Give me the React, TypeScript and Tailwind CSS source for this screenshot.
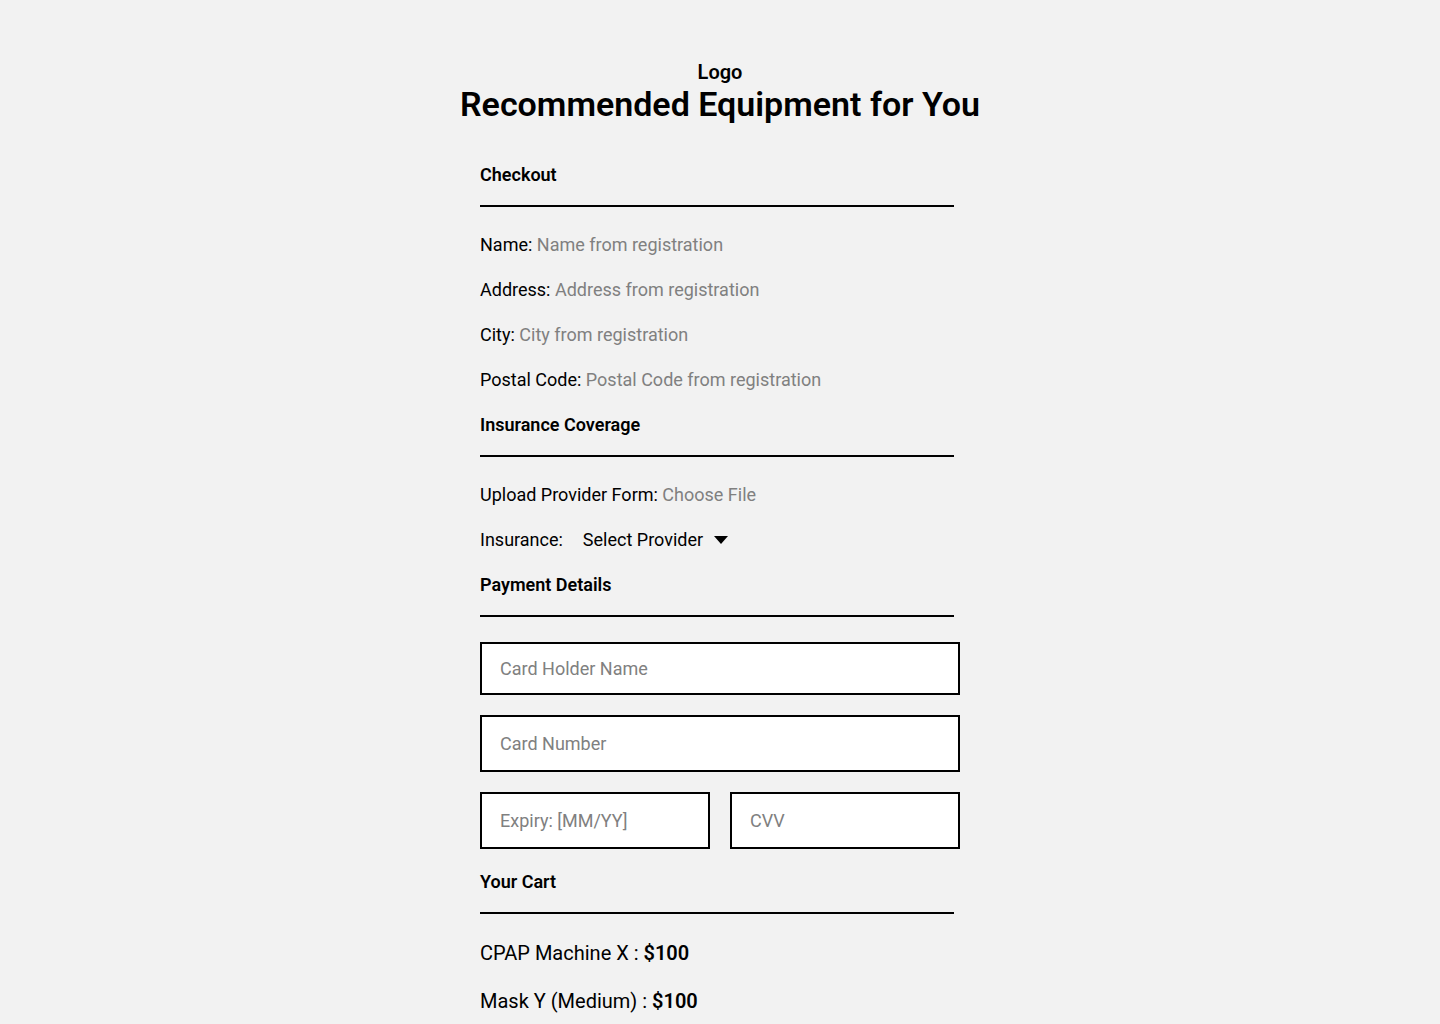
import React from "react";

const Divider = () => <div className="mt-[18px] h-[2px] w-[474px] bg-black" />;

const SectionTitle = ({ children, mt }: { children: React.ReactNode; mt: string }) => (
  <div className={mt}>
    <div className="text-[18px] leading-[24px] font-semibold text-black">{children}</div>
    <Divider />
  </div>
);

const Field = ({ label, value }: { label: string; value: string }) => (
  <div className="text-[18px] leading-[24px] text-black">
    {label} <span className="text-[#808080]">{value}</span>
  </div>
);

const Input = ({ placeholder, h, className = "" }: { placeholder: string; h: string; className?: string }) => (
  <div className={`${h} ${className} flex items-center border-2 border-black bg-white pl-[18px] text-[18px] text-[#808080]`}>
    {placeholder}
  </div>
);

export default function App() {
  return (
    <div className="min-h-[1024px] w-full bg-[#f2f2f2] font-['Roboto',sans-serif] text-black">
      <div className="flex flex-col items-center pt-[60px]">
        <div className="text-[20px] leading-[24px] font-semibold">Logo</div>
        <h1 className="mt-[1px] text-[34px] leading-[38px] font-semibold">Recommended Equipment for You</h1>
      </div>
      <div className="mx-auto flex w-[480px] flex-col">
        <SectionTitle mt="mt-[40px]">Checkout</SectionTitle>
        <div className="mt-[26px] flex flex-col gap-[21px]">
          <Field label="Name:" value="Name from registration" />
          <Field label="Address:" value="Address from registration" />
          <Field label="City:" value="City from registration" />
          <Field label="Postal Code:" value="Postal Code from registration" />
        </div>
        <SectionTitle mt="mt-[21px]">Insurance Coverage</SectionTitle>
        <div className="mt-[26px] flex flex-col gap-[21px]">
          <Field label="Upload Provider Form:" value="Choose File" />
          <div className="flex items-center text-[18px] leading-[24px]">
            <span>Insurance:</span>
            <span className="ml-[20px]">Select Provider</span>
            <svg className="ml-[11px]" width="14" height="8" viewBox="0 0 14 8">
              <path d="M0 0 L14 0 L7 8 Z" fill="black" />
            </svg>
          </div>
        </div>
        <SectionTitle mt="mt-[21px]">Payment Details</SectionTitle>
        <div className="mt-[25px] flex flex-col gap-[20px]">
          <Input placeholder="Card Holder Name" h="h-[53px]" />
          <Input placeholder="Card Number" h="h-[57px]" />
          <div className="flex gap-[20px]">
            <Input placeholder="Expiry: [MM/YY]" h="h-[57px]" className="flex-1" />
            <Input placeholder="CVV" h="h-[57px]" className="flex-1" />
          </div>
        </div>
        <SectionTitle mt="mt-[21px]">Your Cart</SectionTitle>
        <div className="mt-[25px] flex flex-col gap-[20px] text-[20px] leading-[28px]">
          <div>
            CPAP Machine X : <span className="font-semibold">$100</span>
          </div>
          <div>
            Mask Y (Medium) : <span className="font-semibold">$100</span>
          </div>
        </div>
      </div>
    </div>
  );
}
